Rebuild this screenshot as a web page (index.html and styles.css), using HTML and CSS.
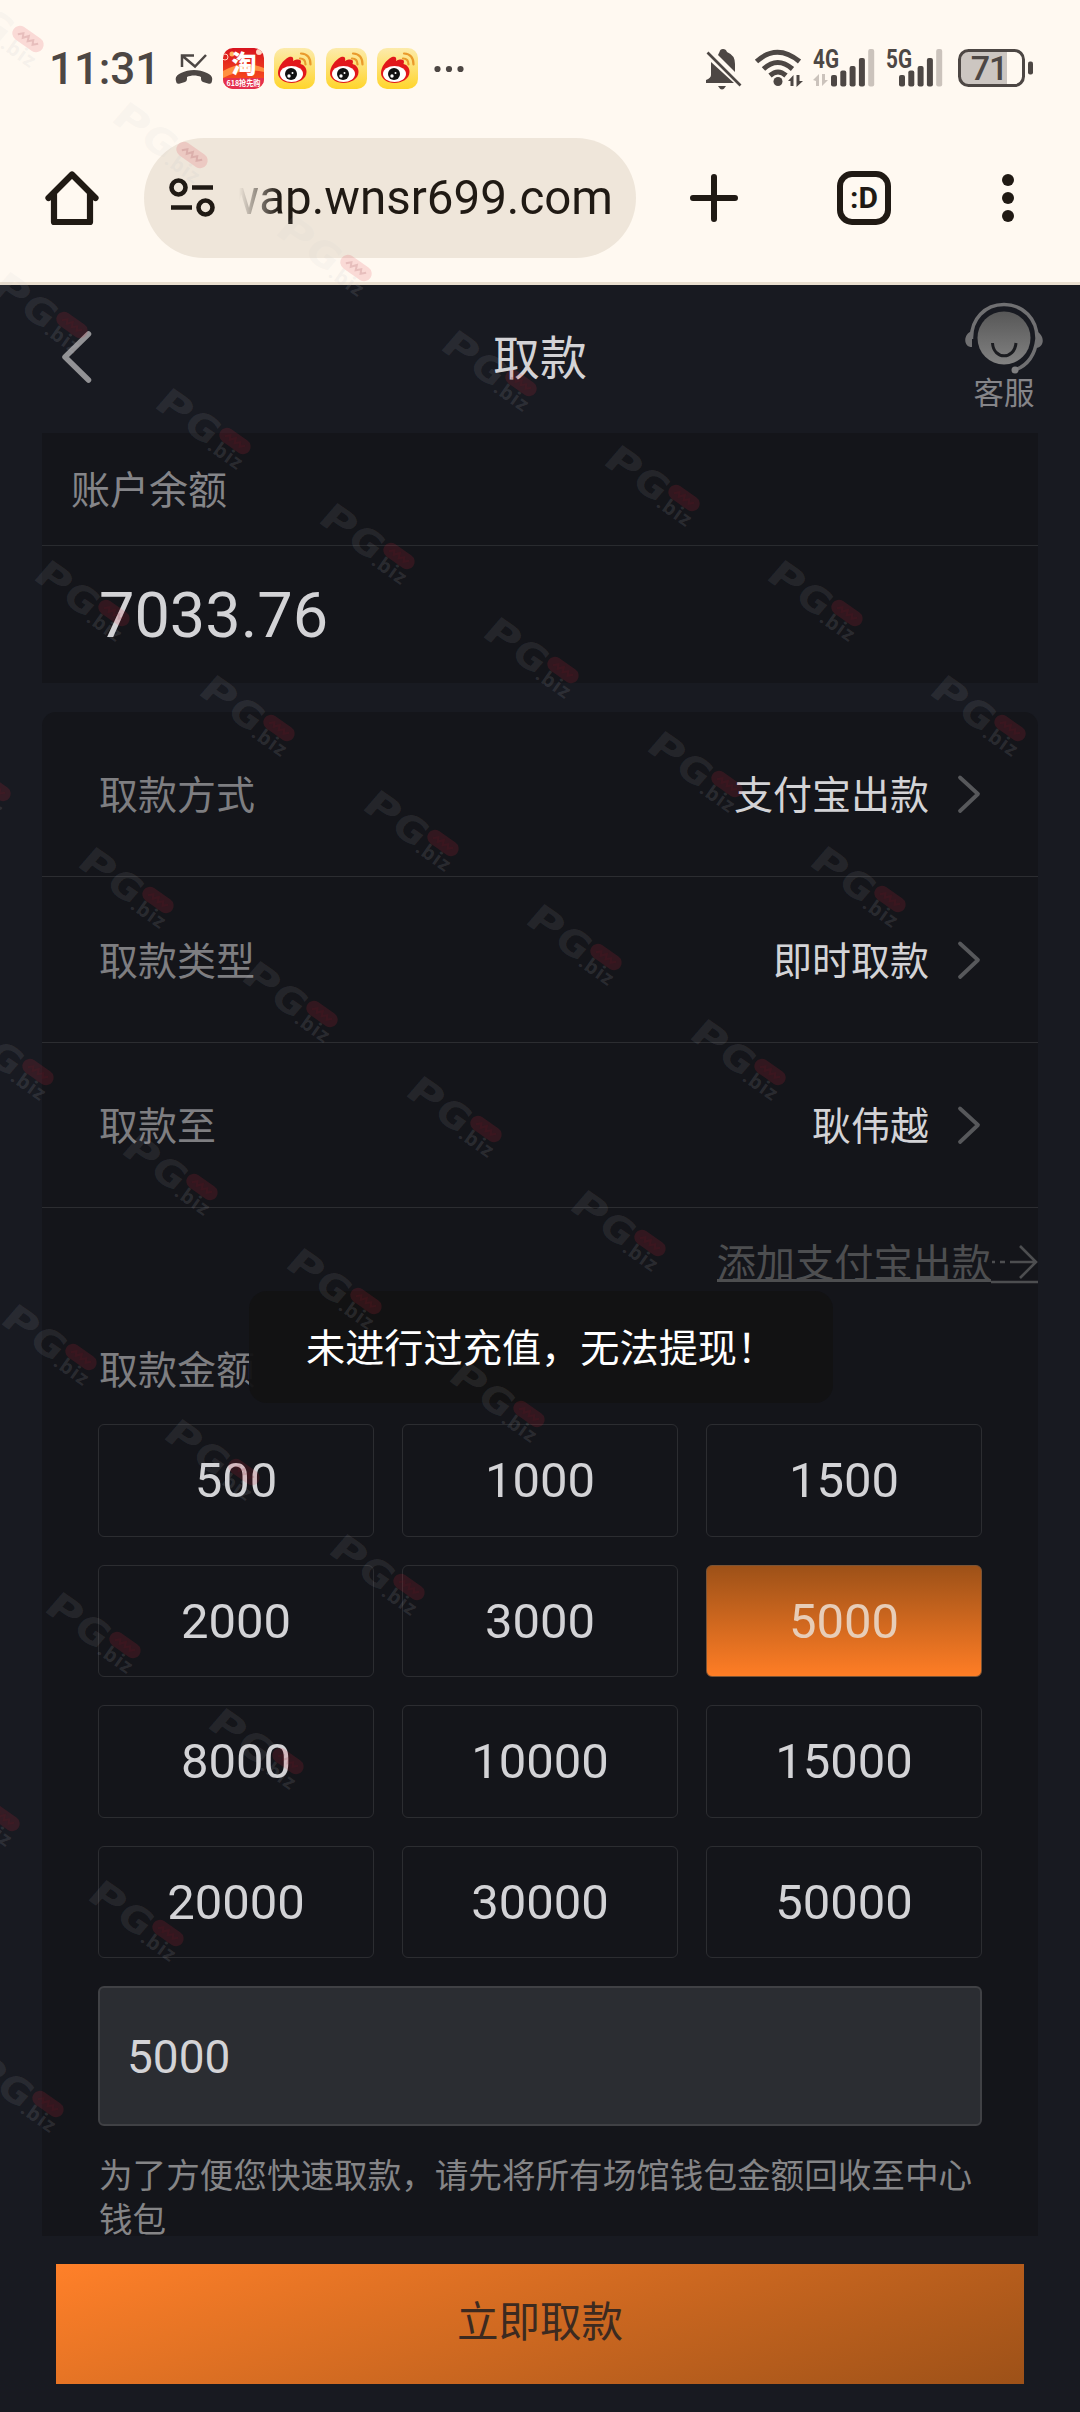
FILE: index.html
```html
<!DOCTYPE html>
<html lang="zh-CN">
<head>
<meta charset="utf-8">
<title>取款</title>
<link rel="stylesheet" href="styles.css">
</head>
<body>
<div class="screen">
  <div class="chrome">
    <div class="status">
      <span class="time">11:31</span>
      <svg class="missed" width="38" height="34" viewBox="0 0 38 34"><path d="M7 15V3.500h12M7 3.500l13 11L31 3" fill="none" stroke="#4d4744" stroke-width="2.500"/><path d="M1 29c-1-4 1-6 5-8 8-4 18-4 26 0 4 2 6 4 5 8-.5 3-2 3-4 2.500l-5-1.500c-2-.7-2-2-2-5-4-2-10-2-14 0 0 3 0 4.300-2 5l-5 1.500c-2 .5-3.500.5-4-2.500z" fill="#4d4744"/></svg>
      <svg class="app" width="41" height="41" viewBox="0 0 41 41"><defs><clipPath id="tb"><rect width="41" height="41" rx="10"/></clipPath><linearGradient id="tg" x2="0" y2="1"><stop stop-color="#d8141f"/><stop offset="1" stop-color="#ff5a1c"/></linearGradient></defs><g clip-path="url(#tb)"><rect width="41" height="41" fill="url(#tg)"/><path d="M0 23q20-12 41-3v4q-20-5-41 6z" fill="#ff9140"/><circle cx="9" cy="6" r="2.500" fill="#ffb45a"/><circle cx="2" cy="9" r="3" fill="none" stroke="#ffd3c0"/><circle cx="36" cy="4" r="3" fill="#ffd3c0"/><rect y="30" width="41" height="11" fill="#e4304e"/></g><text x="21" y="25" class="tao">淘</text><text x="20.500" y="38" class="tao-sub" textLength="34" lengthAdjust="spacingAndGlyphs">618抢先购</text></svg>
      <svg class="app" width="41" height="41" viewBox="0 0 41 41"><use href="#weibo"/></svg>
      <svg class="app" width="41" height="41" viewBox="0 0 41 41"><use href="#weibo"/></svg>
      <svg class="app" width="41" height="41" viewBox="0 0 41 41"><use href="#weibo"/></svg>
      <svg class="more" width="30" height="8" viewBox="0 0 30 8"><g fill="#4d4744"><circle cx="3.500" cy="4" r="3.100"/><circle cx="15" cy="4" r="3.100"/><circle cx="26.500" cy="4" r="3.100"/></g></svg>

      <svg class="bell" width="36" height="42" viewBox="0 0 36 42"><g fill="#4d4744"><path d="M5 13v13q0 3-5 5v3h28zM12 6l17 17V15q0-9-8-12-1-3-4-3t-3.500 3z"/><path d="M12 37h8q-4 7-8 0z"/></g><path d="M1.500 3.500l33 33" stroke="#4d4744" stroke-width="2.600"/></svg>
      <svg class="wifi" width="48" height="38" viewBox="0 0 48 38"><g fill="none" stroke="#4d4744" stroke-width="5"><path d="M1.500 12.500q20.500-18.500 43 0"/><path d="M8.500 20q14-13 29 0"/><path d="M15 26.500q8-7 16 0"/></g><circle cx="23" cy="32.500" r="4.500" fill="#4d4744"/><path d="M33 32l5.500-6v11h-3v-5zM48 32l-6.500 6V26h3v6z" fill="#4d4744"/></svg>
      <svg class="signal" width="62" height="38" viewBox="0 0 62 38"><text x="0" y="18.500" class="net" textLength="26" lengthAdjust="spacingAndGlyphs">4G</text><path d="M0 31l6-6v12H3v-5zM15 31l-6 6V25h3v6z" fill="#cbc3bc"/><g fill="#4d4744"><rect x="18" y="26" width="6" height="11.500" rx="2"/><rect x="27.300" y="21.500" width="6" height="16" rx="2"/><rect x="36.600" y="17" width="6" height="20.500" rx="2"/><rect x="45.900" y="9" width="6" height="28.500" rx="2"/></g><rect x="55.200" y="0" width="6" height="37.500" rx="2" fill="#cbc3bc"/></svg>
      <svg class="signal2" width="57" height="38" viewBox="0 0 57 38"><text x="0" y="18.500" class="net" textLength="26" lengthAdjust="spacingAndGlyphs">5G</text><g fill="#4d4744"><rect x="13" y="26" width="6" height="11.500" rx="2"/><rect x="22.300" y="21.500" width="6" height="16" rx="2"/><rect x="31.600" y="17" width="6" height="20.500" rx="2"/><rect x="40.900" y="9" width="6" height="28.500" rx="2"/></g><rect x="50.200" y="0" width="6" height="37.500" rx="2" fill="#cbc3bc"/></svg>
      <svg class="battery" width="76" height="38" viewBox="0 0 76 38"><path d="M9 2h40v34H9q-7 0-7-7V9q0-7 7-7z" fill="#ccc6c1"/><rect x="1.500" y="1.500" width="64" height="35" rx="9" fill="none" stroke="#4d4744" stroke-width="3"/><rect x="70" y="12.500" width="5" height="13" rx="2" fill="#4d4744"/><text x="31" y="31" class="bat">71</text></svg>
    </div>
    <div class="toolbar">
      <svg class="home" width="54" height="56" viewBox="0 0 54 56"><path d="M3.500 28L27 4.500 50.500 28M9 24v28h36V24" fill="none" stroke="#201a14" stroke-width="6.200" stroke-linecap="round" stroke-linejoin="round"/></svg>
      <div class="url">
        <svg width="46" height="40" viewBox="0 0 46 40"><g fill="none" stroke="#201a14" stroke-width="4.600"><circle cx="9.500" cy="9.500" r="7"/><circle cx="36.500" cy="29.500" r="7"/><path d="M23 9.500h21M2 29.500h21"/></g></svg>
        <div class="address"><span>wap.wnsr699.com</span></div>
      </div>
      <svg class="plus" width="48" height="48" viewBox="0 0 48 48"><path d="M24 3v42M3 24h42" stroke="#201a14" stroke-width="6" stroke-linecap="round"/></svg>
      <div class="tabs">:D</div>
      <svg class="kebab" width="12" height="50" viewBox="0 0 12 50"><g fill="#201a14"><circle cx="6" cy="7" r="6"/><circle cx="6" cy="25" r="6"/><circle cx="6" cy="43" r="6"/></g></svg>
    </div>
  </div>

  <main class="page">
    <header class="header">
      <svg class="back" width="32" height="54" viewBox="0 0 32 54"><path d="M28.500 4L5 27l23.500 23" fill="none" stroke="#929295" stroke-width="5.500" stroke-linecap="round" stroke-linejoin="round"/></svg>
      <h1>取款</h1>
      <div class="service">
        <svg width="80" height="74" viewBox="0 0 80 74"><defs><linearGradient id="face" x2="0" y2="1"><stop stop-color="#575757"/><stop offset="1" stop-color="#828282"/></linearGradient></defs><circle cx="40" cy="37" r="26.500" fill="url(#face)"/><path d="M28.500 42c1 17 22 17 23.500 0" fill="none" stroke="#1b1c20" stroke-width="3"/><path d="M7.500 38C7 18 21 3.500 40 3.500S73.500 18 73 38C71 55 62 65 51 69" fill="none" stroke="#707072" stroke-width="3.500"/><path d="M8 30v16C-1 46-1 33 8 30zM72 30v17c9-1 9-13 0-17z" fill="#707072"/><circle cx="51" cy="69" r="3.500" fill="#808082"/></svg>
        <span>客服</span>
      </div>
    </header>

    <section class="balance">
      <div class="balance-label">账户余额</div>
      <div class="balance-value">7033.76</div>
    </section>

    <section class="form">
      <div class="row"><span>取款方式</span><b>支付宝出款</b><svg width="24" height="40" viewBox="0 0 24 40"><use href="#chev"/></svg></div>
      <div class="row"><span>取款类型</span><b>即时取款</b><svg width="24" height="40" viewBox="0 0 24 40"><use href="#chev"/></svg></div>
      <div class="row"><span>取款至</span><b>耿伟越</b><svg width="24" height="40" viewBox="0 0 24 40"><use href="#chev"/></svg></div>
      <div class="add"><span>添加支付宝出款</span><svg width="47" height="40" viewBox="0 0 47 40"><path d="M1 19h3M9 19h5M19 19h26M29 3l16 16-16 16" fill="none" stroke="#4d4e50" stroke-width="2.600"/><path d="M0 39h47" stroke="#4d4e50" stroke-width="2.600"/></svg></div>
      <div class="amount-label">取款金额</div>
      <div class="amounts">
        <div>500</div><div>1000</div><div>1500</div>
        <div>2000</div><div>3000</div><div class="active">5000</div>
        <div>8000</div><div>10000</div><div>15000</div>
        <div>20000</div><div>30000</div><div>50000</div>
      </div>
      <div class="field">5000</div>
      <p class="note">为了方便您快速取款，请先将所有场馆钱包金额回收至中心钱包</p>
    </section>

    <div class="submit">立即取款</div>
  </main>

  <div class="toast">未进行过充值，无法提现！</div>

  <svg class="marks" width="1080" height="2412" viewBox="0 0 1080 2412">
    <defs>
      <g id="chev"><path d="M2 3.500l18 16.500L2 37" fill="none" stroke="#57585b" stroke-width="3.800" stroke-linecap="round" stroke-linejoin="round"/></g>
      <linearGradient id="wy" x2="0" y2="1"><stop stop-color="#fcebac"/><stop offset="1" stop-color="#ffd52b"/></linearGradient>
      <g id="weibo"><rect width="41" height="41" rx="10" fill="url(#wy)"/><path d="M4 25C4 19 9 12 15 9c3-1 5 0 4 4 4-2 8-2 8 1l-.5 2c4 1 6 4 6 8 0 7-8 11-15 11S4 31 4 25z" fill="#e2171b"/><ellipse cx="17.500" cy="26" rx="11.500" ry="8" fill="#fff"/><circle cx="17" cy="26" r="6" fill="#111"/><circle cx="15" cy="28" r="1.700" fill="#fff"/><circle cx="18.500" cy="25" r="1" fill="#fff"/><path d="M26 10.500q5.500 0 5.500 6M27 5.500q9.500.5 9.500 11" fill="none" stroke="#e99a2c" stroke-width="2.200" stroke-linecap="round"/></g>
      <g id="mark"><g transform="rotate(35)"><g transform="skewX(-6)"><text x="-86" y="19" class="pg" textLength="35" lengthAdjust="spacingAndGlyphs">P</text><text x="-50" y="20" class="pg" textLength="33" lengthAdjust="spacingAndGlyphs">G</text></g><text x="-19" y="23" class="biz">.biz</text><rect x="-17.500" y="-7.500" width="35" height="15" rx="7.500" class="pill"/><path d="M-11 2l4-4 2 4 4-5 2 5 4-4 2 4 4-4" class="scribble"/></g></g>
    </defs>
    <use href="#mark" x="28" y="39"/><use href="#mark" x="192" y="155"/><use href="#mark" x="356" y="268"/><use href="#mark" x="521" y="383"/><use href="#mark" x="684" y="498"/><use href="#mark" x="847" y="613"/><use href="#mark" x="1010" y="728"/>
    <use href="#mark" x="72" y="325"/><use href="#mark" x="235" y="441"/><use href="#mark" x="399" y="556"/><use href="#mark" x="563" y="670"/><use href="#mark" x="727" y="784"/><use href="#mark" x="890" y="899"/>
    <use href="#mark" x="114" y="613"/><use href="#mark" x="279" y="728"/><use href="#mark" x="443" y="843"/><use href="#mark" x="606" y="957"/><use href="#mark" x="770" y="1072"/>
    <use href="#mark" x="-5" y="788"/><use href="#mark" x="158" y="900"/><use href="#mark" x="322" y="1014"/><use href="#mark" x="486" y="1129"/><use href="#mark" x="650" y="1243"/>
    <use href="#mark" x="38" y="1072"/><use href="#mark" x="202" y="1187"/><use href="#mark" x="366" y="1301"/><use href="#mark" x="529" y="1414"/>
    <use href="#mark" x="81" y="1357"/><use href="#mark" x="244" y="1472"/><use href="#mark" x="409" y="1587"/>
    <use href="#mark" x="125" y="1645"/><use href="#mark" x="288" y="1761"/>
    <use href="#mark" x="4" y="1818"/><use href="#mark" x="168" y="1933"/>
    <use href="#mark" x="48" y="2104"/>
  </svg>
</div>
</body>
</html>
```
FILE: styles.css
```css
* { box-sizing: border-box; }
body { margin: 0; background: #181a21; font-family: "Noto Sans CJK SC", sans-serif; }
svg { display: block; flex: none; overflow: visible; }
.screen { position: relative; width: 1080px; height: 2412px; overflow: hidden; }

.chrome { height: 285px; background: #fff9f1; border-bottom: 3px solid #eadfd0; }
.status { display: flex; align-items: flex-start; height: 138px; padding: 48px 47px 0 49px; }
.time { width: 127px; font: 500 44px/42px Roboto, sans-serif; letter-spacing: -.1px; color: #4d4744; }
.missed { margin: 4px 10px 0 -1px; }
.app { margin-right: 10.4px; }
.more { margin: 17px auto 0 5px; }
.tao { font: 900 25px "Noto Sans CJK SC", sans-serif; fill: #fff; text-anchor: middle; }
.tao-sub { font: 700 8px/8px "Noto Sans CJK SC", sans-serif; fill: #fff; text-anchor: middle; }
.bell { margin: 1px 13px 0 0; }
.wifi { margin: 1px 10px 0 0; }
.signal { margin: 1px 11px 0 0; }
.signal2 { margin: 1px 15px 0 0; }
.battery { margin-top: 1px; margin-right: -1px; }
.net { font: 700 25px Roboto, sans-serif; fill: #4d4744; }
.bat { font: 500 34px Roboto, sans-serif; fill: #4d4744; text-anchor: middle; letter-spacing: -1px; }

.toolbar { display: flex; align-items: center; height: 120px; padding: 0 66px 0 45px; }
.home { margin-right: 45px; }
.url { display: flex; align-items: center; width: 492px; height: 120px; padding: 0 23px 0 25px; border-radius: 60px; background: #efe6da; }
.address { display: flex; justify-content: flex-end; flex: 1; margin-left: 24px; overflow: hidden; mask-image: linear-gradient(90deg, transparent, #000 40px); }
.address span { font: 400 47.5px/64px Roboto, sans-serif; color: #201a14; }
.plus { margin: 0 99px 0 54px; }
.tabs { display: flex; align-items: center; justify-content: center; width: 54px; height: 54px; border: 6px solid #201a14; border-radius: 15px; font: 700 30px/28px Roboto, sans-serif; color: #201a14; }
.kebab { margin-left: auto; }

.page { display: flex; flex-direction: column; height: 2127px; padding: 0 42px; background: #181a21; }
.header { display: grid; grid-template-columns: 96px 1fr 96px; height: 148px; }
.back { margin: 45px 0 0 18px; }
.header h1 { margin: 0; font-size: 47px; font-weight: 400; line-height: 140px; text-align: center; color: #d3d3d6; }
.service { display: flex; flex-direction: column; align-items: center; padding-top: 16px; margin: 0 -28px 0 -12px; padding-left: 12px; }
.service span { margin-top: -4px; font-size: 30.5px; line-height: 40px; color: #858589; }

.balance { flex: none; height: 250px; margin-bottom: 29px; background: #14151a; }
.balance-label { height: 113px; padding-left: 29px; border-bottom: 1px solid #292b2f; font-size: 39px; line-height: 108px; color: #858589; }
.balance-value { padding-left: 57px; font: 400 63px/140px Roboto, sans-serif; color: #d3d3d6; }

.form { flex: none; height: 1524px; overflow: hidden; border-radius: 14px 14px 0 0; background: #14151a; }
.row { display: flex; align-items: center; height: 165.4px; padding: 0 56px 0 57px; border-bottom: 1px solid #2c2d31; font-size: 39px; line-height: 60px; }
.row span { flex: 1; margin-top: -4px; color: #7e7e81; }
.row b { margin: -4px 29px 0 0; font-weight: 400; color: #d3d3d6; }
.add { display: flex; align-items: center; justify-content: flex-end; height: 110px; }
.add span { margin-top: -2px; border-bottom: 3px solid #4d4e50; font-size: 39.2px; line-height: 37px; color: #4d4e50; }
.amount-label { height: 106px; padding-left: 57px; font-size: 39px; line-height: 99px; color: #7e7e81; }
.amounts { display: grid; grid-template-columns: repeat(3, 1fr); grid-auto-rows: 112.5px; gap: 28px; padding: 0 56px; }
.amounts div { display: flex; align-items: center; justify-content: center; padding-top: 2px; border: 1px solid #2c2d31; border-radius: 6px; font: 400 49px/60px Roboto, sans-serif; color: #d3d3d6; }
.amounts .active { border-color: #7b5334; background: linear-gradient(#9d5118, #ff7d25); color: #e7cdb8; }
.field { height: 140px; margin: 28px 56px 0; padding-left: 27px; border: 2px solid #404145; border-radius: 6px; background: #2b2d32; font: 400 46px/138px Roboto, sans-serif; color: #d3d3d6; }
.note { margin: 26px 50px 0 57px; font-size: 33.6px; line-height: 44px; color: #858587; }

.submit { flex: none; height: 120px; margin: 28px 14px 0; background: linear-gradient(160deg, #ff8029, #9d5118); font-size: 41.5px; line-height: 111px; text-align: center; color: #3c2a20; }

.toast { position: absolute; left: 249px; top: 1291px; width: 584px; height: 112px; padding-left: 57px; border-radius: 18px; background: rgba(18, 18, 19, .95); font-size: 39.2px; line-height: 108px; white-space: nowrap; color: #fff; }
.marks { position: absolute; left: 0; top: 0; pointer-events: none; }
.pg { font: 700 37px "DejaVu Sans", sans-serif; fill: rgba(200, 200, 205, .1); }
.biz { font: 700 20px "Open Sans", sans-serif; letter-spacing: 1px; fill: rgba(190, 190, 200, .14); }
.pill { fill: rgba(220, 40, 60, .15); }
.scribble { fill: none; stroke: rgba(120, 20, 35, .14); stroke-width: 2; }
```
